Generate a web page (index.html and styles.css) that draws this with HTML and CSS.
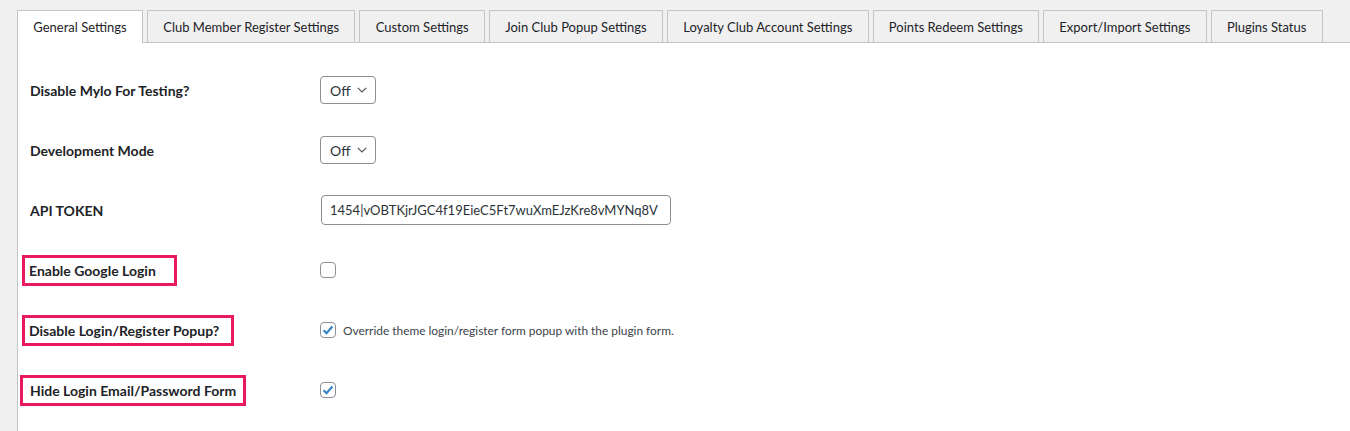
FILE: index.html
```html
<!DOCTYPE html>
<html lang="en">
<head>
    <meta charset="UTF-8">
    <meta name="viewport" content="width=device-width, initial-scale=1.0">
    <title>Loyalty Club Settings</title>
    <link rel="stylesheet" href="styles.css">
</head>
<body>

<div class="wrap">
    <nav class="tabs">
        <a class="tab active" href="#">General Settings</a>
        <a class="tab" href="#">Club Member Register Settings</a>
        <a class="tab" href="#">Custom Settings</a>
        <a class="tab" href="#">Join Club Popup Settings</a>
        <a class="tab" href="#">Loyalty Club Account Settings</a>
        <a class="tab" href="#">Points Redeem Settings</a>
        <a class="tab" href="#">Export/Import Settings</a>
        <a class="tab" href="#">Plugins Status</a>
    </nav>

    <div class="panel">
        <div class="row">
            <div class="label">Disable Mylo For Testing?</div>
            <div class="field">
                <span class="select">Off
                    <svg width="10" height="6" viewBox="0 0 10 6"><path d="M0.8 0.8l4.2 4.2 4.2-4.2" fill="none" stroke="#50575e" stroke-width="1.2"/></svg>
                </span>
            </div>
        </div>
        <div class="row">
            <div class="label">Development Mode</div>
            <div class="field">
                <span class="select">Off
                    <svg width="10" height="6" viewBox="0 0 10 6"><path d="M0.8 0.8l4.2 4.2 4.2-4.2" fill="none" stroke="#50575e" stroke-width="1.2"/></svg>
                </span>
            </div>
        </div>
        <div class="row">
            <div class="label">API TOKEN</div>
            <div class="field">
                <input class="text" type="text" value="1454|vOBTKjrJGC4f19EieC5Ft7wuXmEJzKre8vMYNq8V">
            </div>
        </div>
        <div class="row">
            <div class="label"><span class="mark mark-google">Enable Google Login</span></div>
            <div class="field">
                <span class="check"></span>
            </div>
        </div>
        <div class="row">
            <div class="label"><span class="mark mark-popup">Disable Login/Register Popup?</span></div>
            <div class="field">
                <span class="check on">
                    <svg width="14" height="14" viewBox="0 0 14 14"><path d="M2.6 7.2l2.9 3 5.9-6.6" fill="none" stroke="#3582c4" stroke-width="2.2"/></svg>
                </span>
                <span class="desc">Override theme login/register form popup with the plugin form.</span>
            </div>
        </div>
        <div class="row">
            <div class="label"><span class="mark mark-hide">Hide Login Email/Password Form</span></div>
            <div class="field">
                <span class="check on">
                    <svg width="14" height="14" viewBox="0 0 14 14"><path d="M2.6 7.2l2.9 3 5.9-6.6" fill="none" stroke="#3582c4" stroke-width="2.2"/></svg>
                </span>
            </div>
        </div>
    </div>
</div>

</body>
</html>
```

FILE: styles.css
```css
body {
    margin: 0;
    background: #f0f0f1;
    color: #1d2327;
    font-family: Lato, "Liberation Sans", sans-serif;
}
.wrap {
    padding: 10px 0 0 17px;
}

/* tab strip */
.tabs {
    display: flex;
    gap: 4px;
    border-bottom: 1px solid #c3c4c7;
}
.tab {
    display: block;
    height: 29px;
    line-height: 29px;
    padding: 2px 15.25px 0;
    border: 1px solid #c3c4c7;
    border-bottom: none;
    background: #f0f0f1;
    color: #1d2327;
    font-size: 13px;
    text-decoration: none;
}
.tab.active {
    background: #fff;
    margin-bottom: -1px;
    height: 30px;
}

/* settings panel */
.panel {
    background: #fff;
    border-left: 1px solid #c3c4c7;
    padding: 17px 0 30px 12px;
}
.row {
    display: flex;
    align-items: center;
    height: 60px;
}
.label {
    width: 290px;
    font-size: 14px;
    font-weight: 700;
}
.field {
    display: flex;
    align-items: center;
}
.select {
    display: inline-flex;
    align-items: center;
    gap: 7px;
    height: 26px;
    padding: 0 8px 0 9px;
    border: 1px solid #8c8f94;
    border-radius: 4px;
    font-size: 14px;
    color: #2c3338;
}
.text {
    width: 350px;
    height: 30px;
    box-sizing: border-box;
    margin-left: 1px;
    padding: 0 6px 0 8px;
    border: 1px solid #8c8f94;
    border-radius: 4px;
    font-family: inherit;
    font-size: 13px;
    color: #2c3338;
}
.check {
    display: inline-flex;
    align-items: center;
    justify-content: center;
    width: 14px;
    height: 14px;
    border: 1px solid #8c8f94;
    border-radius: 4px;
    background: #fff;
}
.desc {
    margin-left: 7px;
    font-size: 11.9px;
    color: #3c434a;
}

/* highlighted labels */
.mark {
    display: inline-block;
    padding: 4px 18px 4px 4px;
    margin-left: -8px;
    border: 3px solid #e8195c;
}
.mark-popup {
    padding-right: 12px;
}
.mark-hide {
    margin-left: -10px;
    padding-left: 7px;
    padding-right: 7px;
}
```
